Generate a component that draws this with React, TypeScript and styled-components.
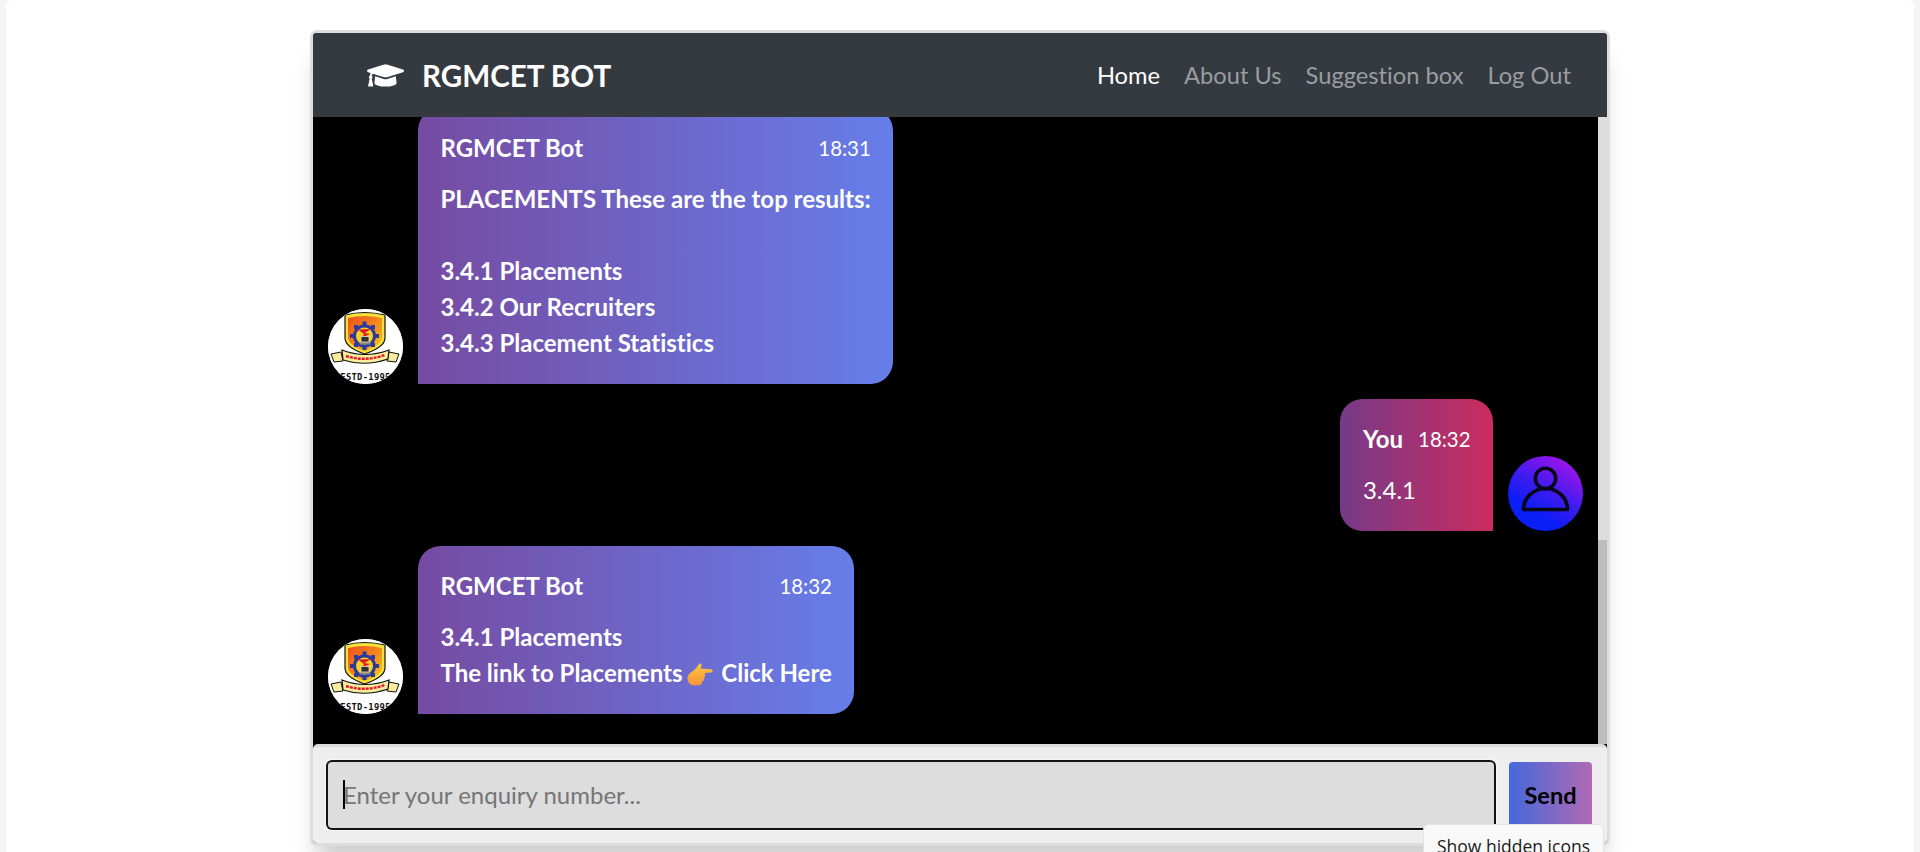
import React from "react";
import styled, { createGlobalStyle } from "styled-components";
import { FaGraduationCap } from "react-icons/fa";

const Global = createGlobalStyle`
  html, body { margin: 0; padding: 0; height: 100%; background: #f5f5f5; overflow: hidden; }
  body { font-family: "Lato", "Liberation Sans", sans-serif; font-variant-ligatures: none; }
  #root { height: 100%; }
`;

const Page = styled.div`
  box-sizing: border-box;
  height: 852px;
  width: 1908px;
  margin-left: 6px;
  padding: 30px 0 6px 304px;
  background: #fff;
  border-radius: 6px 6px 0 0;
`;

const Frame = styled.div`
  box-sizing: border-box;
  width: 1300px;
  height: 816px;
  display: flex;
  flex-direction: column;
  border: 3px solid #ddd;
  border-radius: 7px;
  background: #000;
  box-shadow: 0 22px 22px -7px rgba(0, 0, 0, 0.2);
`;

const Navbar = styled.nav`
  flex: none;
  height: 84px;
  display: flex;
  align-items: center;
  justify-content: space-between;
  padding: 0 24px 0 54px;
  background: #343a40;
  border-radius: 4px 4px 0 0;
`;

const Brand = styled.div`
  display: flex;
  align-items: center;
  gap: 18px;
  color: #fff;
  font-size: 29.6px;
  font-weight: 700;
`;

const NavLinks = styled.div`
  display: flex;
`;

const NavLink = styled.a<{ $active?: boolean }>`
  padding: 0 12px;
  font-size: 23.7px;
  line-height: 36px;
  color: ${(p) => (p.$active ? "#fff" : "#9a9da0")};
`;

const ChatRow = styled.div`
  flex: 1;
  min-height: 0;
  display: flex;
`;

const Messages = styled.main`
  flex: 1;
  min-width: 0;
  display: flex;
  flex-direction: column;
  justify-content: flex-end;
  gap: 15px;
  padding: 0 15px 30px;
  overflow: hidden;
  background: #000;
`;

const ScrollTrack = styled.div`
  flex: none;
  width: 9px;
  display: flex;
  flex-direction: column;
  justify-content: flex-end;
  background: #ddd;
`;

const ScrollThumb = styled.div`
  height: 204px;
  background: #bdbdbd;
`;

const Msg = styled.div<{ $right?: boolean }>`
  flex: none;
  display: flex;
  align-items: flex-end;
  gap: 15px;
  flex-direction: ${(p) => (p.$right ? "row-reverse" : "row")};
`;

const AvatarBox = styled.div<{ $user?: boolean }>`
  flex: none;
  width: 75px;
  height: 75px;
  border-radius: 50%;
  overflow: hidden;
  background: ${(p) =>
    p.$user ? "linear-gradient(212deg, #b512e8 4%, #3a1cf0 48%, #0a1ef6 72%)" : "#fff"};
  svg { display: block; }
`;

const Bubble = styled.div<{ $right?: boolean }>`
  padding: 22.5px;
  max-width: 675px;
  color: #fff;
  border-radius: 22.5px;
  ${(p) =>
    p.$right
      ? `border-bottom-right-radius: 0; background: linear-gradient(to right, #753a88, #cc2b5e);`
      : `border-bottom-left-radius: 0; background: linear-gradient(to right, #764ba2, #667eea);`}
`;

const MsgInfo = styled.div`
  display: flex;
  justify-content: space-between;
  align-items: center;
  gap: 15px;
  height: 34px;
  padding-bottom: 2px;
  margin-bottom: 15px;
`;

const MsgName = styled.div`
  font-size: 24px;
  font-weight: 700;
`;

const MsgTime = styled.div`
  font-size: 20.4px;
`;

const MsgText = styled.div<{ $plain?: boolean }>`
  margin: -1px 0 1px;
  font-size: 24px;
  line-height: 36px;
  font-weight: ${(p) => (p.$plain ? 400 : 700)};
  white-space: nowrap;
`;

const Emoji = styled.svg`
  display: inline-block;
  vertical-align: -4px;
  width: 26px;
  height: 23px;
  margin: 0 2px 0 5px;
`;

const InputBar = styled.form`
  flex: none;
  display: flex;
  gap: 15px;
  padding: 15px;
  border-top: 3px solid #ddd;
  border-radius: 5px 5px 4px 4px;
  background: #eee;
`;

const InputWrap = styled.div`
  position: relative;
  flex: 1;
  &::after {
    content: "";
    position: absolute;
    left: 15px;
    top: 18px;
    width: 1.5px;
    height: 29px;
    background: #000;
  }
`;

const TextInput = styled.input`
  box-sizing: border-box;
  display: block;
  width: 100%;
  height: 66px;
  padding: 15px 15px 17px;
  border: none;
  border-radius: 4px;
  background: #ddd;
  font-family: inherit;
  font-size: 24px;
  font-variant-ligatures: none;
  outline: none;
  box-shadow: 0 0 0 2px #141414, 0 0 0 3px #f8f8f8;
  &::placeholder { color: #757575; opacity: 1; }
`;

const SendButton = styled.button`
  flex: none;
  width: 83px;
  height: 66px;
  padding: 0;
  border: none;
  border-radius: 4px;
  background: linear-gradient(to right, #4568dc, #b06ab3);
  color: #000;
  font-family: inherit;
  font-size: 23.5px;
  font-weight: 700;
`;

const Tooltip = styled.div`
  position: absolute;
  left: 1423px;
  top: 824px;
  width: 181px;
  height: 50px;
  box-sizing: border-box;
  padding-top: 9px;
  text-align: center;
  background: #f9f9f9;
  border: 1px solid #e4e4e4;
  border-radius: 6px;
  color: #1a1a1a;
  font-family: "Open Sans", sans-serif;
  font-size: 17.5px;
  white-space: nowrap;
`;

const CollegeLogo = () => (
  <svg width="75" height="75" viewBox="0 0 75 75">
    <defs>
      <linearGradient id="shieldFill" x1="0" y1="0" x2="1" y2="1">
        <stop offset="0" stopColor="#ee4f1e" />
        <stop offset="0.5" stopColor="#f4861c" />
        <stop offset="1" stopColor="#f8cb1f" />
      </linearGradient>
    </defs>
    <rect width="75" height="75" fill="#fff" />
    <path d="M17 6 Q36 1 57 6 L57 29 Q57 38 36.5 45 Q17 38 17 29 Z" fill="#f8e23a" stroke="#111" strokeWidth="1.2" />
    <path d="M20 9 Q36 5 54 9 L54 28 Q54 36 36.5 42 Q20 36 20 28 Z" fill="url(#shieldFill)" />
    <g fill="#2b3a9c">
      <circle cx="36.5" cy="27" r="11.5" />
      <rect x="34.5" y="12.5" width="4" height="4" />
      <rect x="34.5" y="37.5" width="4" height="3.5" />
      <rect x="22" y="25" width="4" height="4" />
      <rect x="47" y="25" width="4" height="4" />
      <rect x="26" y="16" width="4" height="4" />
      <rect x="43" y="16" width="4" height="4" />
      <rect x="26" y="34" width="4" height="4" />
      <rect x="43" y="34" width="4" height="4" />
    </g>
    <circle cx="36.5" cy="27" r="8.5" fill="#f7d21f" />
    <path d="M30 20.5 L43 20 L36.5 24 L42 25 L34.5 28.5 L36 25 Z" fill="#e3182d" />
    <rect x="33" y="27.5" width="8" height="5.5" fill="#333" stroke="#ddd" strokeWidth="0.8" />
    <rect x="31.5" y="33.5" width="11" height="2" fill="#888" />
    <path d="M3 45 L13 43 L15 52 L6 53 Z" fill="#f9ec9a" stroke="#111" strokeWidth="1" />
    <path d="M71 45 L61 43 L59 52 L68 53 Z" fill="#f9ec9a" stroke="#111" strokeWidth="1" />
    <path d="M14 41 Q37 50 61 41 L60 50 Q37 58 15 51 Z" fill="#f9ec9a" stroke="#111" strokeWidth="1.2" />
    <path d="M18 47 Q37 53 57 46" fill="none" stroke="#e3182d" strokeWidth="2.4" strokeDasharray="3 1" />
    <text x="37.5" y="71" textAnchor="middle" fontFamily="DejaVu Sans Mono, monospace" fontWeight="700" fontSize="8.8" letterSpacing="0.3" fill="#111">
      ESTD-1995
    </text>
  </svg>
);

const UserIcon = () => (
  <svg width="75" height="75" viewBox="0 0 75 75" fill="none" stroke="#06061a" strokeWidth="3.6" strokeLinejoin="round">
    <circle cx="37.5" cy="22.5" r="10.2" />
    <path d="M15.5 53.5 a22 21 0 0 1 44 0 z" />
  </svg>
);

const PointRight = () => (
  <Emoji viewBox="0 0 26 23" aria-label="pointing right">
    <defs>
      <linearGradient id="handFill" x1="0" y1="0" x2="0" y2="1">
        <stop offset="0" stopColor="#ffc83d" />
        <stop offset="1" stopColor="#f7933a" />
      </linearGradient>
    </defs>
    <path
      d="M13 0.5 C14.6 0.4 15 2 14.2 3.6 L13.6 5.4 L24 6.2 C26.3 6.6 26.2 9.3 24 9.5 L17.6 9.9 C18.5 11 18.4 12.4 17.5 13 C18 14.1 17.6 15.4 16.6 15.8 C17 17 16.4 18.3 15.2 18.5 C15.4 20.2 14.4 21.8 12.6 22 L8 22.5 C3.6 22.7 0.5 19.8 0.5 15.6 C0.5 11.6 3.8 9.5 6.6 7.6 C9.3 5.7 10.6 2.2 13 0.5 Z"
      fill="url(#handFill)"
    />
  </Emoji>
);

type Message = { time: string; lines: React.ReactNode };

const BotMessage = ({ time, lines }: Message) => (
  <Msg>
    <AvatarBox><CollegeLogo /></AvatarBox>
    <Bubble>
      <MsgInfo>
        <MsgName>RGMCET Bot</MsgName>
        <MsgTime>{time}</MsgTime>
      </MsgInfo>
      <MsgText>{lines}</MsgText>
    </Bubble>
  </Msg>
);

export default function App() {
  return (
    <>
      <Global />
      <Page>
        <Frame>
          <Navbar>
            <Brand>
              <FaGraduationCap size={37} />
              RGMCET BOT
            </Brand>
            <NavLinks>
              <NavLink $active>Home</NavLink>
              <NavLink>About Us</NavLink>
              <NavLink>Suggestion box</NavLink>
              <NavLink>Log Out</NavLink>
            </NavLinks>
          </Navbar>
          <ChatRow>
            <Messages>
              <BotMessage
                time="18:31"
                lines={
                  <>
                    PLACEMENTS These are the top results:
                    <br />
                    <br />
                    3.4.1 Placements
                    <br />
                    3.4.2 Our Recruiters
                    <br />
                    3.4.3 Placement Statistics
                  </>
                }
              />
              <Msg $right>
                <AvatarBox $user><UserIcon /></AvatarBox>
                <Bubble $right>
                  <MsgInfo>
                    <MsgName>You</MsgName>
                    <MsgTime>18:32</MsgTime>
                  </MsgInfo>
                  <MsgText $plain>3.4.1</MsgText>
                </Bubble>
              </Msg>
              <BotMessage
                time="18:32"
                lines={
                  <>
                    3.4.1 Placements
                    <br />
                    The link to Placements
                    <PointRight />{" "}
                    Click Here
                  </>
                }
              />
            </Messages>
            <ScrollTrack><ScrollThumb /></ScrollTrack>
          </ChatRow>
          <InputBar>
            <InputWrap>
              <TextInput placeholder="Enter your enquiry number..." />
            </InputWrap>
            <SendButton type="button">Send</SendButton>
          </InputBar>
        </Frame>
      </Page>
      <Tooltip>Show hidden icons</Tooltip>
    </>
  );
}
